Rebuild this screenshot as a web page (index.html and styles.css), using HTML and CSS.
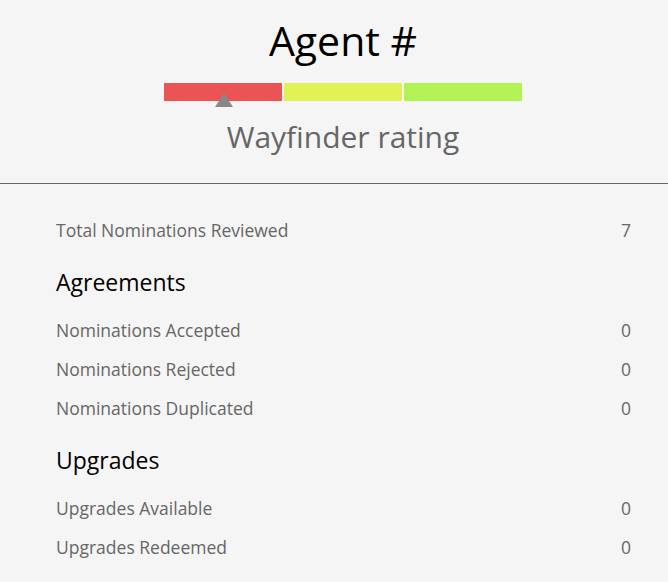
FILE: index.html
```html
<!DOCTYPE html>
<html lang="en">
  <head>
    <meta charset="UTF-8" />
    <meta name="viewport" content="width=device-width, initial-scale=1.0" />
    <title>Agent Profile</title>
    <link rel="stylesheet" href="styles.css">
  </head>
  <body>
    <div class="header">
      <h1 class="agent">Agent #</h1>
      <div class="rating-bar">
        <div class="seg red"></div>
        <div class="seg yellow"></div>
        <div class="seg green"></div>
        <div class="marker"></div>
      </div>
      <div class="rating-label">Wayfinder rating</div>
    </div>

    <div class="stats">
      <div class="row"><span>Total Nominations Reviewed</span><span>7</span></div>

      <h3 class="section">Agreements</h3>
      <div class="row"><span>Nominations Accepted</span><span>0</span></div>
      <div class="row"><span>Nominations Rejected</span><span>0</span></div>
      <div class="row"><span>Nominations Duplicated</span><span>0</span></div>

      <h3 class="section">Upgrades</h3>
      <div class="row"><span>Upgrades Available</span><span>0</span></div>
      <div class="row"><span>Upgrades Redeemed</span><span>0</span></div>
    </div>
  </body>
</html>
```

FILE: styles.css
```css
body {
  margin: 0;
  background: #f5f5f5;
  font-family: "Open Sans", sans-serif;
  color: #666;
}
.header {
  display: flex;
  flex-direction: column;
  align-items: center;
  padding: 13px 0 0 18px;
  height: 184px;
  box-sizing: border-box;
  border-bottom: 1px solid #666;
}
.agent {
  margin: 0;
  font-size: 41px;
  font-weight: 400;
  line-height: 54px;
  color: #000;
}
.rating-bar {
  position: relative;
  display: flex;
  gap: 2px;
  margin-top: 16px;
  width: 358px;
}
.seg {
  flex: 1;
  height: 18px;
}
.red { background: #eb5454; }
.yellow { background: #e1f255; }
.green { background: #b2f254; }
.marker {
  position: absolute;
  left: 51px;
  top: 10px;
  width: 0;
  height: 0;
  border-left: 9px solid transparent;
  border-right: 9px solid transparent;
  border-bottom: 14px solid #888;
}
.rating-label {
  margin-top: 16px;
  font-size: 30px;
  line-height: 40px;
}
.stats {
  padding: 27px 37px 0 56px;
}
.row {
  display: flex;
  justify-content: space-between;
  font-size: 17.5px;
  line-height: 39px;
}
.section {
  margin: 17px 0 14px;
  font-size: 23px;
  font-weight: 400;
  line-height: 30px;
  color: #000;
}
```
